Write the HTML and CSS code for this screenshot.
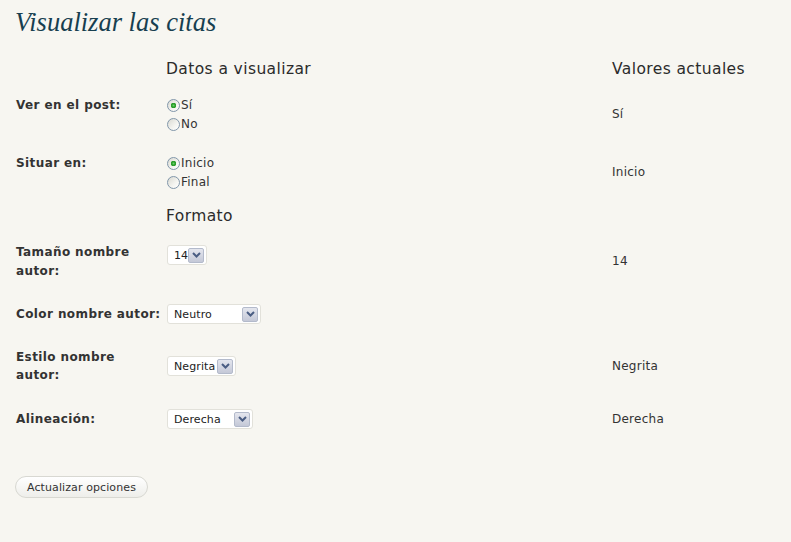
FILE: index.html
```html
<!DOCTYPE html>
<html lang="es">
<head>
<meta charset="utf-8">
<title>Visualizar las citas</title>
<link rel="stylesheet" href="styles.css">
</head>
<body>
<div class="wrap">
  <h2 class="title">Visualizar las citas</h2>
  <form class="options">
    <div class="head-row">
      <span></span>
      <h3 class="col-head">Datos a visualizar</h3>
      <h3 class="col-head">Valores actuales</h3>
    </div>

    <div class="row">
      <div class="label top">Ver en el post:</div>
      <div class="ctrl">
        <label class="radio"><input type="radio" name="post" checked>Sí</label>
        <label class="radio"><input type="radio" name="post">No</label>
      </div>
      <div class="val">Sí</div>
    </div>

    <div class="row">
      <div class="label top">Situar en:</div>
      <div class="ctrl">
        <label class="radio"><input type="radio" name="pos" checked>Inicio</label>
        <label class="radio"><input type="radio" name="pos">Final</label>
      </div>
      <div class="val">Inicio</div>
    </div>

    <div class="head-row">
      <span></span>
      <h3 class="col-head">Formato</h3>
      <span></span>
    </div>

    <div class="row">
      <div class="label">Tamaño nombre<br>autor:</div>
      <div class="ctrl ctrl-top">
        <span class="select s-size"><span class="txt">14</span><span class="arrow"><svg width="9" height="6" viewBox="0 0 9 6"><polyline points="1,1 4.5,4.5 8,1" fill="none" stroke="#4a5d83" stroke-width="2"/></svg></span></span>
      </div>
      <div class="val">14</div>
    </div>

    <div class="row r-single">
      <div class="label">Color nombre autor:</div>
      <div class="ctrl">
        <span class="select s-color"><span class="txt">Neutro</span><span class="arrow"><svg width="9" height="6" viewBox="0 0 9 6"><polyline points="1,1 4.5,4.5 8,1" fill="none" stroke="#4a5d83" stroke-width="2"/></svg></span></span>
      </div>
      <div class="val"></div>
    </div>

    <div class="row r-style">
      <div class="label">Estilo nombre<br>autor:</div>
      <div class="ctrl">
        <span class="select s-style"><span class="txt">Negrita</span><span class="arrow"><svg width="9" height="6" viewBox="0 0 9 6"><polyline points="1,1 4.5,4.5 8,1" fill="none" stroke="#4a5d83" stroke-width="2"/></svg></span></span>
      </div>
      <div class="val">Negrita</div>
    </div>

    <div class="row r-last">
      <div class="label">Alineación:</div>
      <div class="ctrl">
        <span class="select s-align"><span class="txt">Derecha</span><span class="arrow"><svg width="9" height="6" viewBox="0 0 9 6"><polyline points="1,1 4.5,4.5 8,1" fill="none" stroke="#4a5d83" stroke-width="2"/></svg></span></span>
      </div>
      <div class="val">Derecha</div>
    </div>

    <div class="submit">
      <button type="button" class="button">Actualizar opciones</button>
    </div>
  </form>
</div>
</body>
</html>
```
FILE: styles.css
```css
html, body {
  margin: 0;
  padding: 0;
  background: #f7f6f1;
}

body {
  font-family: "DejaVu Sans", Verdana, sans-serif;
  font-size: 12px;
  color: #333;
}

.wrap {
  padding: 7px 15px 0 15px;
}

.title {
  margin: 0 0 17px 0;
  font-family: "Liberation Serif", Georgia, serif;
  font-style: italic;
  font-weight: normal;
  font-size: 26.5px;
  line-height: 30px;
  color: #173f50;
}

.options {
  margin: 0;
}

.head-row,
.row {
  display: grid;
  grid-template-columns: 151px 446px 1fr;
  align-items: center;
}

.head-row {
  height: 31px;
}

.col-head {
  margin: 0;
  font-size: 15.5px;
  font-weight: normal;
  letter-spacing: 0.4px;
  line-height: 31px;
  color: #2b2b2b;
}

.row {
  padding: 10.5px 0 9.5px 0;
}

.r-single {
  min-height: 27px;
}

.r-style {
  min-height: 37px;
}

.r-style .label {
  line-height: 18.5px;
}

.r-last {
  min-height: 29px;
}

.label {
  padding-left: 1px;
  font-weight: bold;
  font-size: 12px;
  letter-spacing: 0.4px;
  line-height: 19px;
  color: #333;
}

.label.top {
  align-self: start;
}

.ctrl {
  display: flex;
  flex-direction: column;
  align-items: flex-start;
}

.ctrl-top {
  align-self: start;
  margin-top: 2.5px;
}

.val {
  font-size: 12px;
  letter-spacing: 0.25px;
  line-height: 19px;
  color: #333;
}

.radio {
  display: flex;
  align-items: center;
  height: 19px;
  font-size: 12px;
  letter-spacing: 0.25px;
  color: #333;
}

.radio input {
  appearance: none;
  -webkit-appearance: none;
  box-sizing: border-box;
  width: 13px;
  height: 13px;
  margin: 0 1px 0 1px;
  border: 1px solid #8196aa;
  border-radius: 50%;
  background: linear-gradient(135deg, #d9d9d2 0%, #f4f4f0 60%, #ffffff 100%);
}

.radio input:checked {
  background:
    radial-gradient(circle at 50% 50%, #6bd36b 0, #31a431 1.5px, #2a9a2a 2.6px, transparent 3px),
    linear-gradient(135deg, #d9d9d2 0%, #f4f4f0 60%, #ffffff 100%);
}

.select {
  display: inline-flex;
  align-items: center;
  box-sizing: border-box;
  height: 20px;
  margin-left: 1px;
  padding: 0 2px 0 6px;
  border: 1px solid #e2e1da;
  border-radius: 3px;
  background: #fff;
  font-size: 11px;
  letter-spacing: 0.1px;
  color: #222;
}

.select .txt {
  flex: 1;
  white-space: nowrap;
}

.s-size { width: 40px; }
.s-color { width: 94px; }
.s-style { width: 69px; }
.s-align { width: 86px; }

.arrow {
  display: flex;
  align-items: center;
  justify-content: center;
  box-sizing: border-box;
  width: 16px;
  height: 15px;
  border: 1px solid #b3bacb;
  border-radius: 2px;
  background: linear-gradient(#e4e6ee, #c4c8d7);
}

.submit {
  margin-top: 33px;
}

.button {
  box-sizing: border-box;
  height: 22px;
  padding: 0 11px;
  border: 1px solid #d8d8d2;
  border-radius: 11px;
  background: linear-gradient(#ffffff, #eeeeea);
  font-family: "DejaVu Sans", Verdana, sans-serif;
  font-size: 11px;
  letter-spacing: 0.1px;
  color: #333;
  cursor: pointer;
}
```
